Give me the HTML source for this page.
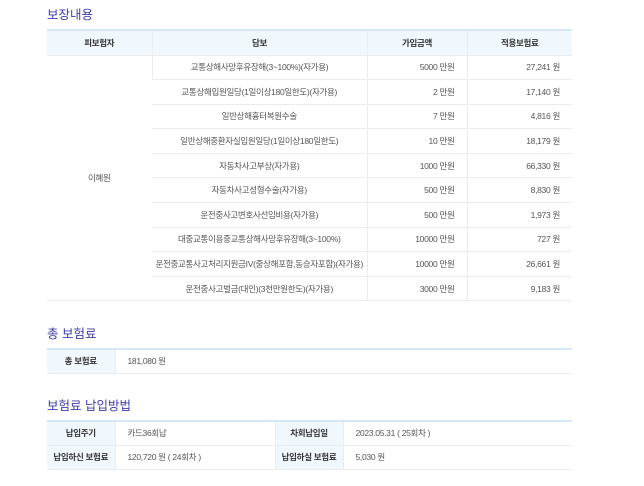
<!DOCTYPE html>
<html><head><meta charset="utf-8"><style>
*{margin:0;padding:0;box-sizing:border-box}
body{width:644px;height:486px;background:#fff;font-family:"Liberation Sans","Noto Sans CJK KR",sans-serif;color:#555;font-size:8.5px;letter-spacing:-0.3px;position:relative;overflow:hidden}
h2{position:absolute;left:47px;font-size:12.5px;font-weight:normal;color:#3d3da8;letter-spacing:0}
table{position:absolute;left:47px;width:525px;border-collapse:collapse;table-layout:fixed;border-top:2px solid #d4e7f5}
td,th{border-bottom:1px solid #ececec;border-left:1px solid #ececec;padding:0;white-space:nowrap;overflow:hidden}
td:first-child,th:first-child{border-left:none}
th{background:#f1f8fd;color:#333;font-weight:bold;text-align:center}
.c{text-align:center}.r{text-align:right;padding-right:12px}.l{text-align:left;padding-left:12px}
</style></head><body>
<h2 style="top:4px">보장내용</h2>
<table style="top:29px">
<colgroup><col style="width:105px"><col style="width:215px"><col style="width:100px"><col style="width:105px"></colgroup>
<tr style="height:25px"><th>피보험자</th><th>담보</th><th>가입금액</th><th>적용보험료</th></tr>
<tr style="height:24.6px"><td class="c" rowspan="10">이혜원</td><td class="c">교통상해사망후유장해(3~100%)(자가용)</td><td class="r">5000 만원</td><td class="r">27,241 원</td></tr>
<tr style="height:24.6px"><td class="c">교통상해입원일당(1일이상180일한도)(자가용)</td><td class="r">2 만원</td><td class="r">17,140 원</td></tr>
<tr style="height:24.6px"><td class="c">일반상해흉터복원수술</td><td class="r">7 만원</td><td class="r">4,816 원</td></tr>
<tr style="height:24.6px"><td class="c">일반상해중환자실입원일당(1일이상180일한도)</td><td class="r">10 만원</td><td class="r">18,179 원</td></tr>
<tr style="height:24.6px"><td class="c">자동차사고부상(자가용)</td><td class="r">1000 만원</td><td class="r">66,330 원</td></tr>
<tr style="height:24.6px"><td class="c">자동차사고성형수술(자가용)</td><td class="r">500 만원</td><td class="r">8,830 원</td></tr>
<tr style="height:24.6px"><td class="c">운전중사고변호사선임비용(자가용)</td><td class="r">500 만원</td><td class="r">1,973 원</td></tr>
<tr style="height:24.6px"><td class="c">대중교통이용중교통상해사망후유장해(3~100%)</td><td class="r">10000 만원</td><td class="r">727 원</td></tr>
<tr style="height:24.6px"><td class="c">운전중교통사고처리지원금IV(중상해포함,동승자포함)(자가용)</td><td class="r">10000 만원</td><td class="r">26,661 원</td></tr>
<tr style="height:24.6px"><td class="c">운전중사고벌금(대인)(3천만원한도)(자가용)</td><td class="r">3000 만원</td><td class="r">9,183 원</td></tr>
</table>
<h2 style="top:323px">총 보험료</h2>
<table style="top:348px">
<colgroup><col style="width:68px"><col></colgroup>
<tr style="height:24px"><th>총 보험료</th><td class="l">181,080 원</td></tr>
</table>
<h2 style="top:395px">보험료 납입방법</h2>
<table style="top:420px">
<colgroup><col style="width:68px"><col style="width:160px"><col style="width:68px"><col></colgroup>
<tr style="height:24px"><th>납입주기</th><td class="l">카드36회납</td><th style="border-left:1px solid #ececec">차회납입일</th><td class="l">2023.05.31 ( 25회차 )</td></tr>
<tr style="height:24px"><th>납입하신 보험료</th><td class="l">120,720 원 ( 24회차 )</td><th style="border-left:1px solid #ececec">납입하실 보험료</th><td class="l">5,030 원</td></tr>
</table>
</body></html>
